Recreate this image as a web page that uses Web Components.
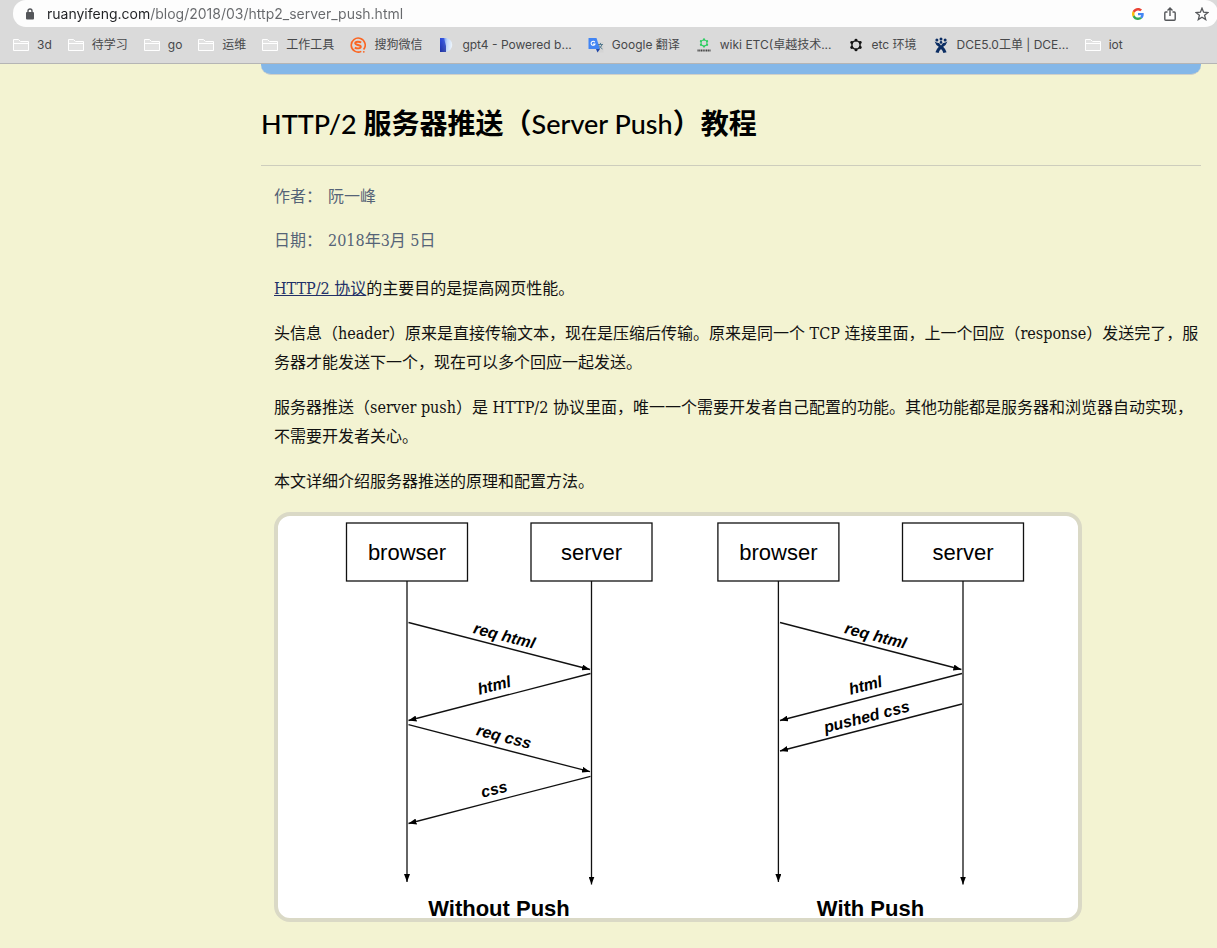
<!DOCTYPE html>
<html lang="zh-CN">
<head>
<meta charset="utf-8">
<title>HTTP/2 服务器推送（Server Push）教程</title>
<style>
  html, body { margin: 0; }
  body { background: #f3f3d2; min-height: 100vh; color: #111; font: 16px/29px "DejaVu Serif Condensed", "Noto Sans CJK SC", serif; }
</style>
</head>
<body>
<browser-bar>
  <address-box slot="address"></address-box>
  <book-mark icon="folder">3d</book-mark>
  <book-mark icon="folder">待学习</book-mark>
  <book-mark icon="folder">go</book-mark>
  <book-mark icon="folder">运维</book-mark>
  <book-mark icon="folder">工作工具</book-mark>
  <book-mark icon="sogou">搜狗微信</book-mark>
  <book-mark icon="gpt">gpt4 - Powered b...</book-mark>
  <book-mark icon="translate">Google 翻译</book-mark>
  <book-mark icon="wiki">wiki ETC(卓越技术...</book-mark>
  <book-mark icon="etc">etc 环境</book-mark>
  <book-mark icon="dce">DCE5.0工单 | DCE...</book-mark>
  <book-mark icon="folder">iot</book-mark>
</browser-bar>
<blog-post>
  <span slot="title"><latin-text>HTTP/2 </latin-text>服务器推送（<latin-text>Server Push</latin-text>）教程</span>
  <post-meta label="作者：">阮一峰</post-meta>
  <post-meta label="日期：">2018年3月 5日</post-meta>
  <post-text gap><post-link href="#http2">HTTP/2 协议</post-link>的主要目的是提高网页性能。</post-text>
  <post-text>头信息（header）原来是直接传输文本，现在是压缩后传输。原来是同一个 TCP 连接里面，上一个回应（response）发送完了，服务器才能发送下一个，现在可以多个回应一起发送。</post-text>
  <post-text>服务器推送（server push）是 HTTP/2 协议里面，唯一一个需要开发者自己配置的功能。其他功能都是服务器和浏览器自动实现，不需要开发者关心。</post-text>
  <post-text>本文详细介绍服务器推送的原理和配置方法。</post-text>
  <push-diagram></push-diagram>
</blog-post>
<script>
const define = (name, html, setup) => {
  const template = document.createElement('template');
  template.innerHTML = html;
  customElements.define(name, class extends HTMLElement {
    constructor() {
      super();
      this.attachShadow({ mode: 'open' }).append(template.content.cloneNode(true));
    }
    connectedCallback() { if (setup) setup(this, this.shadowRoot); }
  });
};

const hexRing = (color, y, s) => {
  let out = '';
  for (let i = 0; i < 6; i++) {
    const a = Math.PI / 3 * i + Math.PI / 6;
    out += `<circle cx="${(8 + Math.cos(a) * s).toFixed(2)}" cy="${(y + Math.sin(a) * s).toFixed(2)}" r="${s * .3}" fill="${color}"/>`;
  }
  return out + `<circle cx="8" cy="${y}" r="${s * .84}" fill="none" stroke="${color}" stroke-width="${s * .3}"/>`;
};

const icons = {
  folder: '<path d="M.5 13.500V2.500H5.500L7.500 4.500H15.500V13.500Z" fill="#e2e2e2" stroke="#fff"/><path d="M1 6.500H15" stroke="#fff"/>',
  sogou: '<path d="M13.600 12.600A7 7 0 1 0 11.300 14.400" fill="none" stroke="#fb6522" stroke-width="1.600"/><circle cx="13.800" cy="14.800" r=".9" fill="#fb6522"/><path d="M11.200 5.500C9.500 4.400 5.200 4.200 5.200 6.300C5.200 8.400 10.800 7.600 10.800 9.800C10.800 11.800 6.600 11.700 4.800 10.600" fill="none" stroke="#fb6522" stroke-width="1.900"/>',
  gpt: '<defs><linearGradient id="a" x2="1" y2=".1"><stop offset=".1" stop-color="#2440d0"/><stop offset=".4" stop-color="#86a8f0"/><stop offset=".6" stop-color="#c3d8f6"/><stop offset="1" stop-color="#eaf3fc"/></linearGradient><linearGradient id="b" x2="0" y2="1"><stop stop-color="#2f50e0"/><stop offset="1" stop-color="#1a2c9c"/></linearGradient></defs><path d="M2 1H7A7 7 0 0 1 7.500 15H2Z" fill="url(#a)"/><path d="M2 1H6L8 9V15H2Z" fill="url(#b)" opacity=".8"/>',
  translate: '<path d="M6 5H15.500V15.500H9Z" fill="#d4d4d4"/><path d="M1 1H8.500L12 12H1Q.5 12 .5 11.500V1.500Q.5 1 1 1Z" fill="#4285f4"/><path d="M8 12H12L9.500 15.500Z" fill="#2046a8"/><path d="M10 7.500H15M12.500 6V7.500M14 7.500Q13 10.500 11 11.500M11.200 8.500Q12.500 11 14.500 12" fill="none" stroke="#587d91"/><path d="M6.800 5.200A2 2 0 1 0 7 7H5" fill="none" stroke="#fff" stroke-width="1.100"/>',
  wiki: hexRing('#31cd64', 6, 3.6) + '<path d="M1.500 13.500H14.500" stroke="#444" stroke-width="2" stroke-dasharray="1.200 .5"/>',
  etc: hexRing('#141414', 8, 4.9),
  dce: '<g fill="#0b2d63"><circle cx="8" cy="1.900" r="1.500"/><circle cx="3.900" cy="3" r="1.500"/><circle cx="12.100" cy="3" r="1.500"/><path d="M1.600 4.600Q4 6.300 6 6L8 8.400L10 6Q12 6.300 14.400 4.600Q13.200 8.300 10.200 9.800Q12.500 12 13.600 15.300L10.400 16Q9.800 13.500 8 12Q6.200 13.500 5.600 16L2.400 15.300Q3.500 12 5.800 9.800Q2.800 8.300 1.600 4.600Z"/><circle cx="8" cy="5.400" r="1.300"/></g>'
};

define('browser-bar', `
<style>
  :host { display: block; height: 63px; background: #dadada; border-bottom: 1px solid #b5b5b5; font: 12px/16px Inter, "Noto Sans CJK SC", sans-serif; color: #47484a; overflow: hidden; }
  nav { display: flex; gap: 16px; padding: 9px 13px; white-space: nowrap; }
</style>
<slot name="address"></slot>
<nav aria-label="书签"><slot></slot></nav>`);

define('address-box', `
<style>
  :host { display: flex; align-items: center; height: 27px; margin: 0 -1px 0 13px; padding-left: 13px; background: #fdfdfd; border-radius: 13px; }
  svg { display: block; flex: none; }
  input { flex: 1; min-width: 0; height: 24px; margin: 0 0 0 13px; padding: 0; border: 0; outline: 0; font: 14px/24px Inter, sans-serif; color: #5f6164;
    background: linear-gradient(90deg, #202124 103px, #66686b 103px); -webkit-background-clip: text; background-clip: text; -webkit-text-fill-color: transparent; }
  button { display: grid; place-items: center; width: 32px; height: 26px; padding: 0; border: 0; background: none; }
</style>
<svg width="8" height="12" viewBox="0 0 8 12"><path d="M2 5V3a2 2 0 0 1 4 0V5" fill="none" stroke="#54565a" stroke-width="1.400"/><rect y="4" width="8" height="7.500" rx="1" fill="#54565a"/></svg>
<input type="text" aria-label="地址" value="ruanyifeng.com/blog/2018/03/http2_server_push.html">
<button aria-label="Google"><svg width="12" height="12" viewBox="0 0 48 48"><path fill="#EA4335" d="M24 9.500c3.540 0 6.710 1.220 9.210 3.600l6.850-6.850C35.900 2.380 30.470 0 24 0 14.620 0 6.510 5.380 2.560 13.220l7.980 6.190C12.430 13.720 17.740 9.500 24 9.500z"/><path fill="#4285F4" d="M46.980 24.550c0-1.570-.15-3.090-.38-4.550H24v9.020h12.940c-.58 2.960-2.260 5.480-4.780 7.180l7.730 6c4.510-4.180 7.090-10.360 7.090-17.650z"/><path fill="#FBBC05" d="M10.530 28.590c-.48-1.450-.76-2.990-.76-4.590s.27-3.140.76-4.590l-7.980-6.190C.92 16.460 0 20.120 0 24c0 3.880.92 7.540 2.560 10.780l7.970-6.190z"/><path fill="#34A853" d="M24 48c6.480 0 11.930-2.130 15.890-5.810l-7.730-6c-2.150 1.450-4.920 2.300-8.160 2.300-6.260 0-11.570-4.220-13.470-9.910l-7.980 6.190C6.510 42.620 14.620 48 24 48z"/></svg></button>
<button aria-label="分享"><svg width="12" height="14" viewBox="0 0 12 14" fill="none" stroke="#55575a" stroke-width="1.400"><path d="M3.500 5H1.700Q.8 5 .8 5.900V12.200Q.8 13.200 1.700 13.200H10.300Q11.200 13.200 11.200 12.200V5.900Q11.200 5 10.300 5H8.500M6 9V1.200M3.500 3.500L6 1L8.500 3.500"/></svg></button>
<button aria-label="收藏"><svg width="14" height="14" viewBox="0 0 14 14" fill="none" stroke="#55575a" stroke-width="1.300"><path d="M7 1.200L8.600 5.200L13 5.500L9.600 8.300L10.700 12.600L7 10.200L3.300 12.600L4.400 8.300L1 5.500L5.400 5.200Z"/></svg></button>`);

define('book-mark', `
<style>
  :host { display: block; }
  a { display: flex; align-items: center; gap: 8px; height: 18px; color: inherit; text-decoration: none; }
  svg { display: block; flex: none; }
</style>
<a href="#"><svg width="16" height="16" viewBox="0 0 16 16" fill="none" aria-hidden="true"></svg><slot></slot></a>`,
(host, root) => { root.querySelector('svg').innerHTML = icons[host.getAttribute('icon')]; });

define('blog-post', `
<style>
  :host { display: block; margin: 0 16px 0 261px; }
  .banner { height: 10px; background: #84b7e8; border-bottom: 1px solid #d0d0c8; border-radius: 0 0 10px 10px; }
  h1 { margin: 25px 0 0; padding: 0 0 21px; border-bottom: 1px solid #cdcdbd; font: bold 28px/44px "Noto Sans CJK SC", sans-serif; color: #000; }
  .body { padding: 16px 0 26px 13px; }
</style>
<article>
  <div class="banner"></div>
  <h1><slot name="title"></slot></h1>
  <div class="body"><slot></slot></div>
</article>`);

define('latin-text', `<style>:host { display: inline; font: 500 27px/27px Lato, sans-serif; }</style><slot></slot>`);

define('post-meta', `
<style>
  :host { display: block; color: #556377; }
  dl { display: flex; gap: 6px; margin: 0 0 15px; }
  dd { margin: 0; }
</style>
<dl><dt></dt><dd><slot></slot></dd></dl>`,
(host, root) => { root.querySelector('dt').textContent = host.getAttribute('label'); });

define('post-text', `
<style>
  :host { display: block; }
  :host([gap]) { margin-top: 19px; }
  p { margin: 0 0 16px; }
</style>
<p><slot></slot></p>`);

define('post-link', `<style>:host { display: inline; } a { color: #223068; text-decoration: underline; }</style><a><slot></slot></a>`,
(host, root) => { root.querySelector('a').setAttribute('href', host.getAttribute('href')); });

const participant = (x, name, end) => `
  <rect x="${x - 60.5}" y="7" width="121" height="58" fill="#fff"/>
  <text class="name" x="${x}" y="44">${name}</text>
  <path d="M${x} 65V${end}" marker-end="url(#tip)"/>`;
const message = (x1, y1, x2, y2, tx, ty, label) => `
  <path d="M${x1} ${y1}L${x2} ${y2}" marker-end="url(#tip)"/>
  <text class="label" transform="translate(${tx} ${ty}) rotate(${(y2 - y1) / (x2 - x1) * 56})">${label}</text>`;

define('push-diagram', `
<style>
  :host { display: block; }
  figure { box-sizing: border-box; max-width: 808px; margin: 0; border: 4px solid #dad9c6; border-radius: 16px; background: #fff; }
  svg { display: block; width: 100%; height: auto; overflow: visible; }
  path, rect { stroke: #111; stroke-width: 1.300; }
  marker path { stroke: none; fill: #000; }
  text { font-family: "Liberation Sans", Arial, sans-serif; text-anchor: middle; fill: #000; }
  .name { font-size: 22px; }
  .label { font-size: 16px; font-weight: bold; font-style: italic; }
  .caption { font-size: 22px; font-weight: bold; }
</style>
<figure>
  <svg viewBox="0 0 800 402" role="img" aria-label="Without Push / With Push">
    <defs><marker id="tip" viewBox="0 0 8 6" refX="8" refY="3" markerWidth="8" markerHeight="6" markerUnits="userSpaceOnUse" orient="auto"><path d="M0 0L8 3L0 6Z"/></marker></defs>
    ${participant(129, 'browser', 366)}
    ${participant(313.5, 'server', 368.5)}
    ${message(130.5, 106.5, 312, 153.5, 225, 125, 'req html')}
    ${message(312.5, 157.5, 130.5, 204.5, 217.5, 174.5, 'html')}
    ${message(130.5, 208.7, 312, 255.7, 224.5, 226, 'req css')}
    ${message(312.5, 260.3, 130.5, 307.5, 217.5, 278.5, 'css')}
    <text class="caption" x="221" y="400">Without Push</text>
    ${participant(500.4, 'browser', 366)}
    ${participant(685, 'server', 368.5)}
    ${message(502, 106.5, 683.4, 153.5, 596.3, 125, 'req html')}
    ${message(684, 157.5, 502, 204.5, 588.8, 174.5, 'html')}
    ${message(684, 188, 502, 235, 590, 206, 'pushed css')}
    <text class="caption" x="592.500" y="400">With Push</text>
  </svg>
</figure>`);
</script>
</body>
</html>
